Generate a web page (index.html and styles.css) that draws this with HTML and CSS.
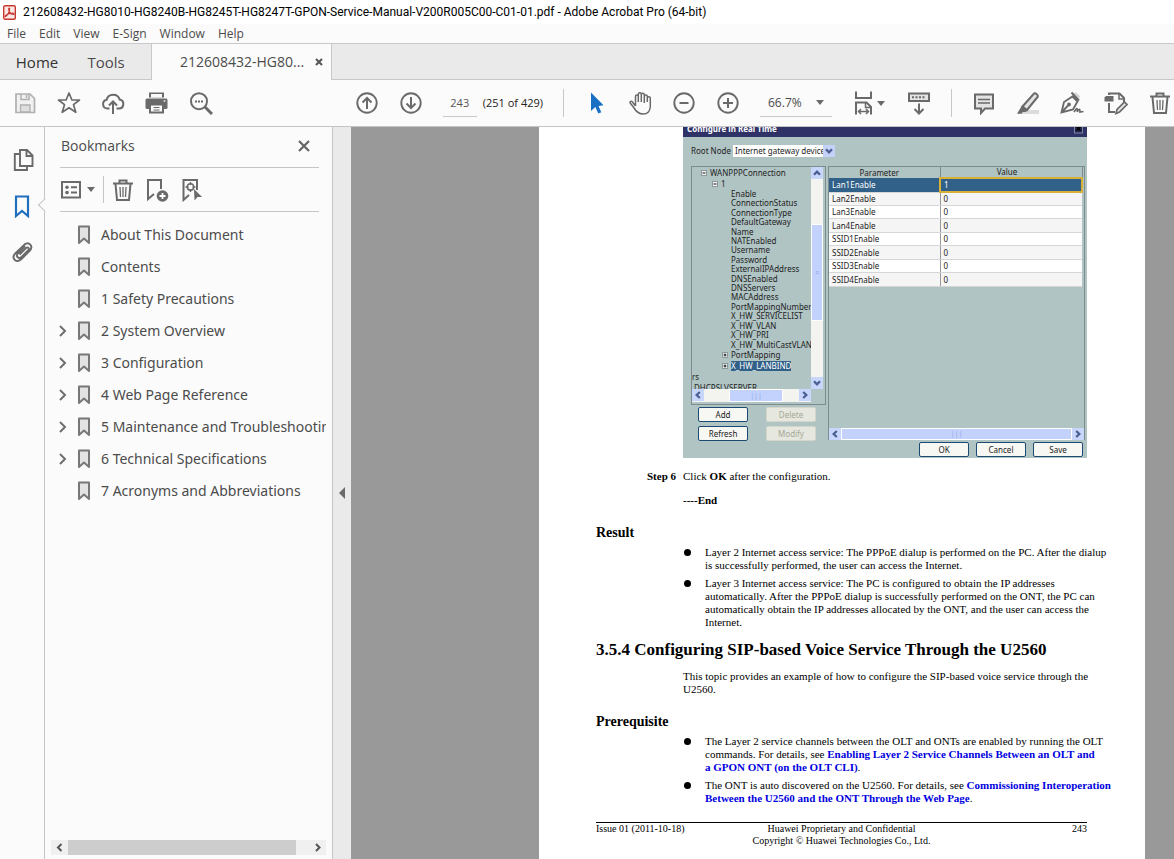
FILE: index.html
```html
<!DOCTYPE html>
<html lang="en">
<head>
<meta charset="utf-8">
<title>212608432-HG8010 - Adobe Acrobat Pro (64-bit)</title>
<link rel="stylesheet" href="styles.css">
</head>
<body>
<svg class="defs" aria-hidden="true">
  <defs>
    <symbol id="mark" viewBox="0 0 14 20"><path d="M2 1.500h10v16.500l-5-4.500-5 4.500z" fill="#e3e3e3" stroke="#777" stroke-width="2" stroke-linejoin="round"/></symbol>
    <symbol id="chev" viewBox="0 0 8 12"><path d="M1 1l5 5-5 5" fill="none" stroke="#6e6e6e" stroke-width="2"/></symbol>
    <symbol id="trash" viewBox="0 0 24 24"><path d="M2 5.500h20M8.500 5V2.500h7V5M4.500 6l1.500 16h12l1.500-16" fill="none" stroke="#6a6a6a" stroke-width="2"/><path d="M9 9l.5 10M12 9v10M15 9l-.5 10" fill="none" stroke="#6a6a6a" stroke-width="1.300"/></symbol>
    <symbol id="caret" viewBox="0 0 8 5"><path d="M0 0h8l-4 5z" fill="#6a6a6a"/></symbol>
    <symbol id="xp" viewBox="0 0 8 8"><path d="M2 2.800L4 4.900l2-2.100" fill="none" stroke="#4a5f94" stroke-width="1.500"/></symbol>
    <symbol id="node" viewBox="0 0 6 6"><rect x=".5" y=".5" width="5" height="5" fill="#f4f4f4" stroke="#8b9b9b"/><path d="M1.500 3h3" stroke="#111"/></symbol>
    <symbol id="nodeplus" viewBox="0 0 6 6"><rect x=".5" y=".5" width="5" height="5" fill="#f4f4f4" stroke="#8b9b9b"/><path d="M1.500 3h3M3 1.500v3" stroke="#111"/></symbol>
  </defs>
</svg>

<header class="titlebar">
  <svg class="logo" viewBox="0 0 13 15"><rect x=".7" y=".7" width="11.600" height="13.600" rx="1.500" fill="#fbe9e7" stroke="#c8362e" stroke-width="1.400"/><path d="M2.500 11.500C4.500 10.500 6.800 6.500 6.600 4 6.400 2.500 5.400 3.200 5.800 4.800c.6 2.400 2.600 4.600 4.700 4.700.9-.1.700-1.300-1-1.300-2.500 0-5 .8-6.800 2.200-.8.700-.7 1.300-.2 1.100z" fill="none" stroke="#c8362e" stroke-width="1.200"/></svg>
  <h1 class="title">212608432-HG8010-HG8240B-HG8245T-HG8247T-GPON-Service-Manual-V200R005C00-C01-01.pdf - Adobe Acrobat Pro (64-bit)</h1>
</header>

<nav class="menu">
  <button>File</button><button>Edit</button><button>View</button><button>E-Sign</button><button>Window</button><button>Help</button>
</nav>

<div class="tabs">
  <button class="tab home">Home</button>
  <button class="tab tools">Tools</button>
  <div class="tab open"><span>212608432-HG80...</span><button class="tabclose" aria-label="Close tab"><svg viewBox="0 0 8 8"><path d="M1 1l6 6M7 1L1 7" stroke="#555" stroke-width="2"/></svg></button></div>
  <div class="tabfill"></div>
</div>

<div class="toolbar">
  <div class="group">
    <button class="tool" aria-label="Save"><svg viewBox="0 0 24 24"><path d="M3 3h14l4.500 4.500V21.500H3z" fill="#f1f1f1" stroke="#b0b0b0" stroke-width="1.700"/><path d="M8 3v5.500h8V3M13.500 4v3" fill="none" stroke="#b0b0b0" stroke-width="1.500"/><path d="M7.500 14h9.500v7H7.500z" fill="#dedede" stroke="#b0b0b0" stroke-width="1.300"/></svg></button>
    <button class="tool" aria-label="Star"><svg viewBox="0 0 24 24"><path d="M12 2l2.900 7h7.600l-6 4.700 2.300 7.600L12 16.800l-6.800 4.500 2.300-7.600-6-4.700h7.600z" fill="none" stroke="#6a6a6a" stroke-width="1.700" stroke-linejoin="round"/></svg></button>
    <button class="tool" aria-label="Upload"><svg viewBox="0 0 24 24"><path d="M8.500 17.500H6.300a4.400 4.400 0 0 1-.7-8.700A6.800 6.800 0 0 1 18.700 8.600a4.500 4.500 0 0 1-.6 8.900h-2.600" fill="none" stroke="#6a6a6a" stroke-width="2"/><path d="M12 23V11M8 14.500l4-4 4 4" fill="none" stroke="#6a6a6a" stroke-width="2"/></svg></button>
    <button class="tool" aria-label="Print"><svg viewBox="0 0 24 24"><path d="M4 1.500h15v5H4z" fill="#6a6a6a"/><path d="M6 3h11v3.500H6z" fill="#fafafa"/><rect x=".5" y="7.500" width="22" height="10.500" rx="1.500" fill="#6a6a6a"/><path d="M5 13.500h13v8H5z" fill="#fafafa" stroke="#6a6a6a" stroke-width="2"/><path d="M8.500 16.500h6M8.500 19h6" stroke="#6a6a6a" stroke-width="1.200"/><circle cx="19.500" cy="10" r="1" fill="#ddd"/></svg></button>
    <button class="tool" aria-label="Search"><svg viewBox="0 0 24 24"><circle cx="10" cy="10.200" r="8" fill="none" stroke="#6a6a6a" stroke-width="2"/><path d="M16 16l7 7" stroke="#6a6a6a" stroke-width="3"/><path d="M6 9.500h2v2H6zM9 9.500h2v2H9zM12 9.500h2v2h-2z" fill="#6a6a6a"/></svg></button>
  </div>
  <div class="group pages">
    <button class="tool" aria-label="Previous page"><svg viewBox="0 0 24 24"><circle cx="12" cy="12" r="9.700" fill="none" stroke="#6a6a6a" stroke-width="1.900"/><path d="M12 18V7M7.500 11.500L12 7l4.500 4.500" fill="none" stroke="#6a6a6a" stroke-width="2"/></svg></button>
    <button class="tool" aria-label="Next page"><svg viewBox="0 0 24 24"><circle cx="12" cy="12" r="9.700" fill="none" stroke="#6a6a6a" stroke-width="1.900"/><path d="M12 6v11M7.500 12.500L12 17l4.500-4.500" fill="none" stroke="#6a6a6a" stroke-width="2"/></svg></button>
    <div class="pagebox"><input class="pageno" type="text" value="243" aria-label="Page number"><span>(251 of 429)</span></div>
  </div>
  <span class="divider"></span>
  <div class="group">
    <button class="tool" aria-label="Select"><svg viewBox="0 0 24 24"><path d="M7 1.500v18.500l4.300-4 3 6.500 3-1.300-2.800-6.200 5-.7z" fill="#1c70c4"/></svg></button>
    <button class="tool" aria-label="Hand"><svg viewBox="0 0 24 24"><path d="M7.500 15V5.500a1.400 1.400 0 0 1 2.800 0V11M10.300 11V3.300a1.500 1.500 0 0 1 3 0V11M13.300 11V3.800a1.500 1.500 0 0 1 3 0V12M16.300 11.500V5.500a1.500 1.500 0 0 1 3 0V11M19.300 7a1.500 1.500 0 0 1 3 .5v8.500c-.5 4.500-3.400 7-7.200 7-5 0-7.200-2.700-9.400-6.500L2 11.800c-.3-1.400 1.400-2 2.200-1L7.500 15" fill="none" stroke="#6a6a6a" stroke-width="1.500" stroke-linejoin="round"/></svg></button>
    <button class="tool" aria-label="Zoom out"><svg viewBox="0 0 24 24"><circle cx="12" cy="12" r="9.700" fill="none" stroke="#6a6a6a" stroke-width="1.900"/><path d="M7.500 12h9" stroke="#6a6a6a" stroke-width="2"/></svg></button>
    <button class="tool" aria-label="Zoom in"><svg viewBox="0 0 24 24"><circle cx="12" cy="12" r="9.700" fill="none" stroke="#6a6a6a" stroke-width="1.900"/><path d="M7 12h10M12 7v10" stroke="#6a6a6a" stroke-width="2"/></svg></button>
    <div class="zoom"><select aria-label="Zoom level"><option>66.7%</option></select><svg class="caret"><use href="#caret"/></svg></div>
    <button class="tool wide" aria-label="Fit width"><svg viewBox="0 0 24 24"><path d="M4 .5V7h15V.5M4 23.500V11.500h10.500l4.500 4.500v7.500" fill="none" stroke="#6a6a6a" stroke-width="2"/><path d="M13.500 11.500v5h5M7 20.500h9M9 18l-2.500 2.500L9 23M14 18l2.500 2.500L14 23" fill="none" stroke="#6a6a6a" stroke-width="1.500"/></svg><svg class="caret"><use href="#caret"/></svg></button>
    <button class="tool" aria-label="Page display"><svg viewBox="0 0 24 24"><rect x="2" y="2.500" width="20" height="7.500" fill="#e3e3e3" stroke="#6a6a6a" stroke-width="2"/><path d="M5 6.200h14" stroke="#6a6a6a" stroke-width="2" stroke-dasharray="2 1.500"/><path d="M12 12.500v9M7.500 18l4.500 4.500 4.500-4.500" fill="none" stroke="#6a6a6a" stroke-width="2"/></svg></button>
  </div>
  <span class="divider"></span>
  <div class="group">
    <button class="tool" aria-label="Comment"><svg viewBox="0 0 24 24"><path d="M3 3.500h18v14H13L9 22v-4.500H3z" fill="#e3e3e3" stroke="#6a6a6a" stroke-width="2"/><path d="M6 8.500h12M6 12h12" stroke="#6a6a6a" stroke-width="1.500"/></svg></button>
    <button class="tool" aria-label="Highlight"><svg viewBox="0 0 24 24"><path d="M10 19h13v4H5z" fill="#dcdcdc"/><path d="M6.500 15.500L18 2.500c1.500-.8 4.500 1.500 3.800 3.200L11 19z" fill="#e3e3e3" stroke="#6a6a6a" stroke-width="2"/><path d="M6 14.500l6 5-2.500 1.500H7l-1.500 1.800H1z" fill="#6a6a6a"/></svg></button>
    <button class="tool" aria-label="Sign"><svg viewBox="0 0 24 24"><path d="M13 2l6 6 1-3-4-3.500z" fill="#d6d6d6"/><path d="M11.500 1.500l7.500 8M1.500 21.500L4 11l8.500-5.500 5 5-4.500 8zM1.500 21.500L8 14.500" fill="none" stroke="#6a6a6a" stroke-width="1.900"/><circle cx="9" cy="13.500" r="1.900" fill="#6a6a6a"/><path d="M14 21c3-4.500 3.500-4.500 3.300-.3 2-3.300 2.700-3.300 2.700.3l3.500-.5" fill="none" stroke="#6a6a6a" stroke-width="1.700"/></svg></button>
    <button class="tool" aria-label="Edit PDF"><svg viewBox="0 0 24 24"><path d="M5 12v9h6M5 4V2.500h10.500L20 7v4" fill="none" stroke="#6a6a6a" stroke-width="2"/><path d="M15 2v6h5.500" fill="none" stroke="#6a6a6a" stroke-width="1.500"/><path d="M.5 6.500L2 5h7.500v5.500h-9z" fill="#6a6a6a"/><path d="M12 22.500l1-4 7.500-7.500 2.500 2.500-7.500 7.500z" fill="#e3e3e3" stroke="#6a6a6a" stroke-width="1.700"/></svg></button>
    <button class="tool" aria-label="Delete"><svg><use href="#trash"/></svg></button>
  </div>
</div>

<main class="work">
  <nav class="rail">
    <button class="tool" aria-label="Page thumbnails"><svg viewBox="0 0 24 24"><path d="M8 6H3.800v16H16v-3.500" fill="none" stroke="#6a6a6a" stroke-width="1.900"/><path d="M9 2h7l5.500 5.500V18H9zM15.500 2v6h6" fill="#fbfbfb" stroke="#6a6a6a" stroke-width="1.900"/></svg></button>
    <button class="tool" aria-label="Bookmarks"><svg viewBox="0 0 24 24"><path d="M5 2.500h12v19.500L11 17l-6 5z" fill="none" stroke="#1f6fbd" stroke-width="2.200"/></svg></button>
    <button class="tool" aria-label="Attachments"><svg viewBox="0 0 24 24"><path d="M8.500 14.500l6.500-6.500c2-1.500 3.800.6 2.300 2.300L10.500 17c-2.800 2.600-6.200-.8-3.600-3.700L14 6.200M14.500 3.700L4 13.700c-4 5 1.500 9.800 6.200 5.600l8.700-8.800c3.600-4-.8-9.500-5.400-5.900" fill="none" stroke="#6a6a6a" stroke-width="1.900"/></svg></button>
    <span class="pointer"></span>
  </nav>

  <aside class="panel">
    <div class="panelhead"><h2>Bookmarks</h2><button aria-label="Close panel"><svg viewBox="0 0 12 12"><path d="M1 1l10 10M11 1L1 11" stroke="#666" stroke-width="2.200"/></svg></button></div>
    <div class="paneltools">
      <button class="opts" aria-label="Options"><svg class="list" viewBox="0 0 20 18"><rect x="1" y="1" width="18" height="15.500" fill="none" stroke="#6a6a6a" stroke-width="2"/><circle cx="6" cy="6.300" r="1.800" fill="#6a6a6a"/><circle cx="6" cy="11.500" r="1.800" fill="#6a6a6a"/><path d="M10 6.300h6M10 11.500h6" stroke="#6a6a6a" stroke-width="2"/></svg><svg class="caret"><use href="#caret"/></svg></button>
      <span class="split"></span>
      <button class="tool" aria-label="Delete bookmark"><svg><use href="#trash"/></svg></button>
      <button class="tool" aria-label="New bookmark"><svg viewBox="0 0 24 24"><path d="M9 16l-6 5V2h13v9" fill="none" stroke="#6a6a6a" stroke-width="2"/><circle cx="17.500" cy="18" r="5.800" fill="#6a6a6a"/><path d="M14.500 18h6M17.500 15v6" stroke="#fff" stroke-width="1.800"/></svg></button>
      <button class="tool" aria-label="Find bookmark"><svg viewBox="0 0 24 24"><path d="M10 17l-5.500 5V2H18v10" fill="none" stroke="#6a6a6a" stroke-width="2"/><circle cx="11.500" cy="9" r="3.200" fill="none" stroke="#6a6a6a" stroke-width="1.500"/><path d="M11.500 4v3M11.500 11v3M6.500 9h3M13.500 9h3" stroke="#6a6a6a" stroke-width="1.400"/><path d="M15 11l8 8h-4.500L15.500 22.500z" fill="#6a6a6a"/></svg></button>
    </div>
    <ul class="marks">
      <li><svg class="chev"></svg><svg class="mark"><use href="#mark"/></svg><a href="#">About This Document</a></li>
      <li><svg class="chev"></svg><svg class="mark"><use href="#mark"/></svg><a href="#">Contents</a></li>
      <li><svg class="chev"></svg><svg class="mark"><use href="#mark"/></svg><a href="#">1 Safety Precautions</a></li>
      <li><svg class="chev"><use href="#chev"/></svg><svg class="mark"><use href="#mark"/></svg><a href="#">2 System Overview</a></li>
      <li><svg class="chev"><use href="#chev"/></svg><svg class="mark"><use href="#mark"/></svg><a href="#">3 Configuration</a></li>
      <li><svg class="chev"><use href="#chev"/></svg><svg class="mark"><use href="#mark"/></svg><a href="#">4 Web Page Reference</a></li>
      <li><svg class="chev"><use href="#chev"/></svg><svg class="mark"><use href="#mark"/></svg><a href="#">5 Maintenance and Troubleshooting</a></li>
      <li><svg class="chev"><use href="#chev"/></svg><svg class="mark"><use href="#mark"/></svg><a href="#">6 Technical Specifications</a></li>
      <li><svg class="chev"></svg><svg class="mark"><use href="#mark"/></svg><a href="#">7 Acronyms and Abbreviations</a></li>
    </ul>
    <div class="hscroll"><svg viewBox="0 0 17 15"><path d="M10.500 4L7 7.500l3.500 3.500" fill="none" stroke="#555" stroke-width="2"/></svg><span class="thumb"></span><svg viewBox="0 0 17 15"><path d="M7 4l3.500 3.500L7 11" fill="none" stroke="#555" stroke-width="2"/></svg></div>
  </aside>

  <button class="splitter" aria-label="Collapse panel"><svg viewBox="0 0 6 12"><path d="M6 0v12L0 6z" fill="#6a6a6a"/></svg></button>

  <div class="viewer">
    <article class="page">
      <section class="dialog">
        <div class="dlgtitle"><span>Configure in Real Time</span><svg viewBox="0 0 9 9"><rect x=".5" y="-3" width="8" height="11" fill="#23264e" stroke="#8486a8"/><path d="M2.500 1.500l4 4M6.500 1.500l-4 4" stroke="#000" stroke-width="1.500"/></svg></div>
        <div class="root"><label for="root">Root Node</label><div class="combo"><select id="root"><option>Internet gateway device</option></select><svg><use href="#xp"/></svg></div></div>
        <div class="cols">
          <div class="left">
            <div class="treebox">
              <div class="tree">
                <div class="n1"><svg><use href="#node"/></svg>WANPPPConnection</div>
                <div class="n2"><svg><use href="#node"/></svg>1</div>
                <ul class="leaves">
                  <li>Enable</li><li>ConnectionStatus</li><li>ConnectionType</li><li>DefaultGateway</li><li>Name</li><li>NATEnabled</li><li>Username</li><li>Password</li><li>ExternalIPAddress</li><li>DNSEnabled</li><li>DNSServers</li><li>MACAddress</li><li>PortMappingNumberOfEntries</li><li>X_HW_SERVICELIST</li><li>X_HW_VLAN</li><li>X_HW_PRI</li><li>X_HW_MultiCastVLAN</li>
                </ul>
                <div class="n3"><svg><use href="#nodeplus"/></svg>PortMapping</div>
                <div class="n3"><svg><use href="#nodeplus"/></svg><mark>X_HW_LANBIND</mark></div>
                <div class="n0">rs</div>
                <div class="n4">DHCPSLVSERVER</div>
              </div>
              <div class="vbar"><svg class="up"><use href="#xp"/></svg><span class="grip">≡</span><svg><use href="#xp"/></svg></div>
              <div class="hbar"><svg class="lt"><use href="#xp"/></svg><span class="grip">|||</span><svg class="rt"><use href="#xp"/></svg></div>
            </div>
            <div class="btns"><button>Add</button><button disabled>Delete</button><button>Refresh</button><button disabled>Modify</button></div>
          </div>
          <div class="right">
            <div class="gridbox">
              <table>
                <thead><tr><th>Parameter</th><th>Value</th></tr></thead>
                <tbody>
                  <tr class="sel"><td>Lan1Enable</td><td>1</td></tr>
                  <tr><td>Lan2Enable</td><td>0</td></tr>
                  <tr><td>Lan3Enable</td><td>0</td></tr>
                  <tr><td>Lan4Enable</td><td>0</td></tr>
                  <tr><td>SSID1Enable</td><td>0</td></tr>
                  <tr><td>SSID2Enable</td><td>0</td></tr>
                  <tr><td>SSID3Enable</td><td>0</td></tr>
                  <tr><td>SSID4Enable</td><td>0</td></tr>
                </tbody>
              </table>
              <div class="hbar full"><svg class="lt"><use href="#xp"/></svg><span class="grip">|||</span><svg class="rt"><use href="#xp"/></svg></div>
            </div>
            <div class="actions"><button>OK</button><button>Cancel</button><button>Save</button></div>
          </div>
        </div>
      </section>

      <p class="step"><b class="stepno">Step 6</b><span>Click <b>OK</b> after the configuration.</span></p>
      <p class="body end"><b>----End</b></p>

      <h3>Result</h3>
      <ul class="bullets">
        <li>Layer 2 Internet access service: The PPPoE dialup is performed on the PC. After the dialup<br>is successfully performed, the user can access the Internet.</li>
        <li>Layer 3 Internet access service: The PC is configured to obtain the IP addresses<br>automatically. After the PPPoE dialup is successfully performed on the ONT, the PC can<br>automatically obtain the IP addresses allocated by the ONT, and the user can access the<br>Internet.</li>
      </ul>

      <h2 class="section">3.5.4 Configuring SIP-based Voice Service Through the U2560</h2>
      <p class="body">This topic provides an example of how to configure the SIP-based voice service through the<br>U2560.</p>

      <h3>Prerequisite</h3>
      <ul class="bullets">
        <li>The Layer 2 service channels between the OLT and ONTs are enabled by running the OLT<br>commands. For details, see <a href="#">Enabling Layer 2 Service Channels Between an OLT and<br>a GPON ONT (on the OLT CLI)</a>.</li>
        <li>The ONT is auto discovered on the U2560. For details, see <a href="#">Commissioning Interoperation<br>Between the U2560 and the ONT Through the Web Page</a>.</li>
      </ul>

      <footer class="foot"><span>Issue 01 (2011-10-18)</span><span class="mid">Huawei Proprietary and Confidential<br>Copyright © Huawei Technologies Co., Ltd.</span><span class="num">243</span></footer>
    </article>
  </div>
</main>
</body>
</html>
```
FILE: styles.css
```css
* { box-sizing: border-box; margin: 0; padding: 0; }
html, body { height: 100%; }
body {
  display: flex;
  flex-direction: column;
  overflow: hidden;
  background: #fbfbfb;
  color: #4b4b4b;
  font: 12px/16px "Open Sans", "Noto Sans", sans-serif;
}
button, input, select { font: inherit; color: inherit; background: none; border: 0; border-radius: 0; }
select { appearance: none; }
svg { display: block; flex: none; }
ul { list-style: none; }
a { color: inherit; text-decoration: none; }
.defs { position: absolute; width: 0; height: 0; }

.titlebar { display: flex; align-items: center; gap: 7px; height: 24px; padding-left: 3px; background: #fff; flex: none; }
.logo { width: 13px; height: 15px; }
.title { font-family: Roboto, sans-serif; font-size: 12px; font-weight: 400; color: #000; white-space: nowrap; }

.menu { display: flex; gap: 13px; height: 19px; padding-left: 7px; flex: none; }
.menu button { line-height: 18px; }

.tabs { display: flex; height: 37px; flex: none; font-size: 15px; }
.tab { border-top: 1px solid #c8c8c8; border-bottom: 1px solid #c8c8c8; background: #eaeaea; }
.home { width: 74px; color: #333; }
.tools { width: 78px; padding-right: 13px; border-right: 1px solid #c8c8c8; }
.open { display: flex; align-items: center; gap: 11px; width: 180px; padding-left: 28px; background: #fbfbfb; border-bottom: 0; border-right: 1px solid #c8c8c8; font-size: 14px; }
.tabclose svg { width: 8px; height: 8px; }
.tabfill { flex: 1; background: #eaeaea; border-top: 1px solid #c8c8c8; border-bottom: 1px solid #c8c8c8; }

.toolbar { display: flex; align-items: center; height: 47px; padding: 0 2px 0 13px; border-bottom: 1px solid #c4c4c4; flex: none; }
.group { display: flex; align-items: center; gap: 20px; }
.pages { margin-left: auto; }
.tool { width: 24px; height: 24px; flex: none; }
.tool svg { width: 24px; height: 24px; }
.divider { width: 1px; height: 28px; margin: 0 20px; background: #c8c8c8; }
.pagebox { display: flex; align-items: center; gap: 6px; color: #222; font-size: 11px; }
.pageno { width: 34px; height: 28px; border-bottom: 1px solid #c8c8c8; color: #555; text-align: center; }
.zoom { display: flex; align-items: center; width: 72px; height: 28px; padding-left: 8px; border-bottom: 1px solid #c8c8c8; }
.zoom select { flex: 1; min-width: 0; }
.tool .caret, .caret { width: 8px; height: 5px; }
.zoom .caret { margin-right: 8px; }
.wide { display: flex; align-items: center; gap: 1px; width: 35px; }

.work { display: flex; flex: 1; min-height: 0; }
.rail { position: relative; display: flex; flex-direction: column; gap: 22px; width: 45px; padding: 21px 0 0 11px; border-right: 1px solid #c4c4c4; flex: none; }
.pointer { position: absolute; top: 73px; right: -6px; width: 10px; height: 10px; background: #fbfbfb; border: solid #c4c4c4; border-width: 0 0 1px 1px; transform: rotate(45deg); }

.panel { display: flex; flex-direction: column; width: 288px; padding: 0 6px 4px 6px; border-right: 1px solid #c4c4c4; flex: none; }
.panelhead, .paneltools { display: flex; align-items: center; margin: 0 7px 0 9px; border-bottom: 1px solid #c4c4c4; }
.panelhead { justify-content: space-between; height: 41px; padding: 0 9px 2px 1px; }
.panelhead h2 { font-size: 14px; font-weight: 400; }
.panelhead svg { width: 12px; height: 12px; }
.paneltools { height: 44px; gap: 10px; padding-left: 1px; }
.opts { display: flex; align-items: center; gap: 6px; }
.list { width: 20px; height: 18px; }
.split { width: 1px; height: 27px; margin: 0 -3px 0 -2px; background: #c4c4c4; }
.marks { flex: 1; padding-top: 7px; font-family: "Noto Sans", sans-serif; font-size: 14px; overflow: hidden; }
.marks li { display: flex; align-items: center; height: 32px; padding-left: 8px; white-space: nowrap; }
.chev { width: 8px; height: 12px; margin-right: 10px; }
.mark { width: 14px; height: 20px; margin-right: 10px; }
.hscroll { display: flex; height: 15px; background: #f0f0f0; }
.hscroll svg { width: 17px; height: 15px; }
.hscroll .thumb { flex: 1; margin-right: 13px; background: #cdcdcd; }

.splitter { display: flex; align-items: center; justify-content: flex-end; width: 18px; padding-right: 6px; background: #eaeaea; flex: none; }
.splitter svg { width: 6px; height: 12px; }

.viewer { display: flex; flex: 1; min-width: 0; padding-right: 29px; background: #999; overflow: hidden; }
.page { flex: 0 1 606px; margin-left: auto; padding: 0 58px 0 57px; background: #fff; color: #000; font: 11px/13px "Liberation Serif", serif; white-space: nowrap; overflow: hidden; }

.dialog { display: flex; flex-direction: column; width: 404px; height: 331px; margin-left: 87px; background: #b0c4c4; color: #222; font: 8px/10px "Noto Sans", sans-serif; }
.dlgtitle { display: flex; justify-content: space-between; align-items: flex-end; height: 10px; padding: 0 4px 3px; background: #2f3266; color: #fff; font-weight: 700; overflow: hidden; }
.dlgtitle svg { width: 9px; height: 9px; }
.root { display: flex; align-items: center; gap: 2px; height: 14px; margin: 7px 0 8px 8px; }
.combo { display: flex; align-items: center; width: 102px; height: 12px; background: #fff; }
.combo select { flex: 1; min-width: 0; height: 12px; padding-left: 2px; overflow: hidden; }
.combo svg { width: 12px; height: 12px; background: #c4d2f7; }
.cols { display: flex; gap: 2px; flex: 1; padding: 0 2px 0 8px; min-height: 0; }
.left { width: 135px; }
.treebox { display: grid; grid-template: 222px 13px / 119px 12px; width: 135px; height: 239px; border: 1px solid #7d8c8c; overflow: hidden; }
.tree { overflow: hidden; }
.tree div { display: flex; align-items: center; height: 11px; }
.tree svg { width: 6px; height: 6px; margin-right: 3px; }
.n1 { padding-left: 9px; }
.n2 { padding-left: 20px; }
.leaves { display: flex; flex-direction: column; height: 160px; padding-left: 39px; }
.leaves li { flex: 1; line-height: 9px; }
.n3 { padding-left: 30px; }
.n4 { padding-left: 2px; }
mark { background: #316088; color: #fff; }
.vbar, .hbar { display: flex; background: #f3f4f0; }
.vbar { flex-direction: column; }
.vbar svg, .hbar svg { width: 12px; height: 12px; background: #c9d6fb; }
.grip { display: flex; align-items: center; justify-content: center; background: #c3d2fc; color: #8fa6e8; border: 1px solid #fff; font-size: 7px; }
.vbar .grip { height: 97px; margin: 45px 0 auto; }
.hbar .grip { flex: 1; margin: 0 16px 0 25px; }
.hbar.full .grip { margin: 0; }
.up { transform: rotate(180deg); }
.lt { transform: rotate(90deg); }
.rt { transform: rotate(-90deg); }
.btns { display: grid; grid-template-columns: 50px 50px; gap: 4px 18px; padding: 2px 0 0 7px; }
.dialog button { height: 15px; background: #f7f7f3; border: 1px solid #1c4a72; border-radius: 2px; }
.dialog button:disabled { background: #e6e8df; border-color: #d3d6c8; color: #a5a796; }
.right { flex: 1; min-width: 0; }
.gridbox { display: flex; flex-direction: column; justify-content: space-between; height: 274px; border: solid #7d8c8c; border-width: 1px 1px 0 1px; }
table { width: 254px; border-collapse: collapse; table-layout: fixed; }
th { height: 11px; font-weight: 400; border-right: 1px solid #7d8c8c; }
th:first-child { width: 111px; padding-right: 10px; }
th:last-child { padding-right: 8px; }
tbody { background: #fff; }
td { height: 13px; padding-left: 3px; border-bottom: 1px solid #d6d6d6; line-height: 12px; }
td + td { border-left: 1px solid #999; }
tbody tr:nth-child(even) { background: #f5f5f5; }
tbody tr:nth-child(4n) td, tbody tr:nth-child(6) td { height: 14px; }
tbody tr.sel { background: #316088; color: #fff; }
.sel td + td { border: 2px solid #d9b037; }
.actions { display: flex; justify-content: flex-end; gap: 7px; padding: 2px 2px 0 0; }
.actions button { width: 50px; }

.step { display: flex; gap: 7px; margin-top: 12px; }
.stepno { width: 80px; text-align: right; }
.body { margin: 10px 0 0 87px; }
.end { margin-top: 11px; }
h3 { margin-top: 18px; font-size: 14px; line-height: 16px; }
.bullets { display: grid; gap: 5px; margin: 5px 0 0 87px; }
.bullets li { display: block; position: relative; padding-left: 22px; }
.bullets li::before { content: ""; position: absolute; left: 1px; top: 3px; width: 7px; height: 7px; border-radius: 50%; background: #000; }
.bullets a { color: #0000e0; font-weight: 700; }
.section { margin-top: 11px; font-size: 17px; line-height: 20px; }
.foot { display: grid; grid-template-columns: 1fr 2fr 1fr; margin-top: 17px; border-top: 1px solid #000; font-size: 10px; line-height: 12px; }
.mid { text-align: center; }
.num { text-align: right; }
```
